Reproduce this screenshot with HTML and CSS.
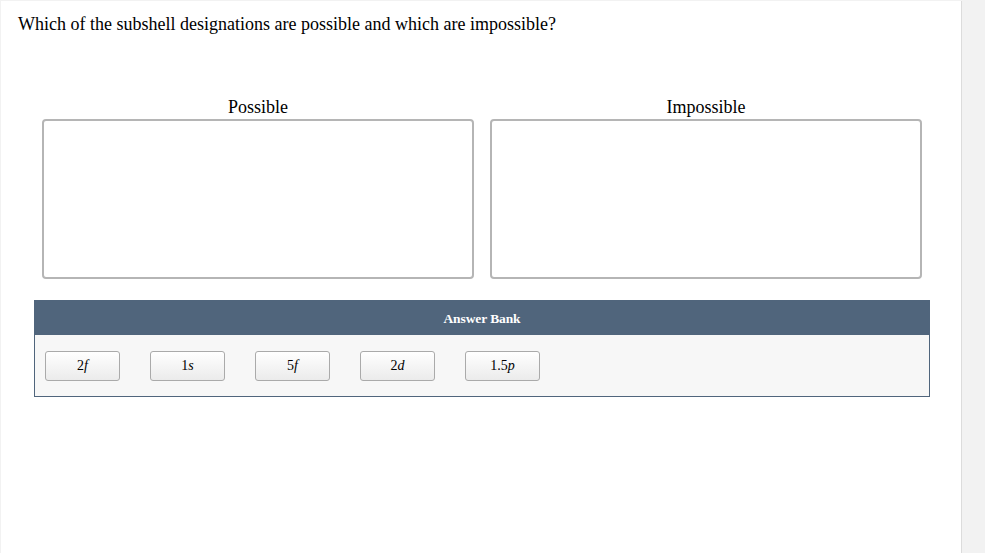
FILE: index.html
```html
<!DOCTYPE html>
<html>
<head>
<meta charset="utf-8">
<link rel="stylesheet" href="styles.css">
</head>
<body>
<div class="page">
  <p class="question">Which of the subshell designations are possible and which are impossible?</p>
  <div class="zones">
    <div class="zone">
      <div class="zone-label">Possible</div>
      <div class="zone-box"></div>
    </div>
    <div class="zone">
      <div class="zone-label">Impossible</div>
      <div class="zone-box"></div>
    </div>
  </div>
  <div class="bank">
    <div class="bank-head">Answer Bank</div>
    <div class="bank-body">
      <div class="chip">2<i>f</i></div>
      <div class="chip">1<i>s</i></div>
      <div class="chip">5<i>f</i></div>
      <div class="chip">2<i>d</i></div>
      <div class="chip">1.5<i>p</i></div>
    </div>
  </div>
</div>
</body>
</html>
```
FILE: styles.css
```css
html, body {
  margin: 0;
  padding: 0;
}
body {
  background: #f2f2f2;
  font-family: "Liberation Serif", "Times New Roman", serif;
  color: #000;
}
.page {
  width: 960px;
  min-height: 552px;
  margin: 1px 0 0 1px;
  background: #fff;
  box-shadow: 1px 0 0 #dcdcdc;
  padding-top: 1px;
  box-sizing: border-box;
}
.question {
  margin: 0;
  padding: 12px 17px 0;
  font-size: 18px;
  line-height: 20px;
}
.zones {
  display: flex;
  gap: 16px;
  margin: 63px 0 0 41px;
}
.zone {
  width: 432px;
  display: flex;
  flex-direction: column;
}
.zone-label {
  text-align: center;
  font-size: 18px;
  line-height: 20px;
  margin-bottom: 2px;
}
.zone-box {
  height: 156px;
  border: 2px solid #b5b5b5;
  border-radius: 4px;
  background: #fff;
}
.bank {
  margin: 21px 31px 0 33px;
  border: 1px solid #50657c;
  border-top: none;
}
.bank-head {
  background: #50657c;
  color: #fff;
  font-weight: bold;
  font-size: 13.5px;
  height: 35px;
  line-height: 37px;
  text-align: center;
  letter-spacing: -0.1px;
}
.bank-body {
  background: #f7f7f7;
  display: flex;
  gap: 30px;
  padding: 16px 10px 15px;
}
.chip {
  width: 73px;
  height: 28px;
  border: 1px solid #aaa;
  border-radius: 3px;
  background: linear-gradient(#ffffff, #ebebeb);
  font-size: 14px;
  line-height: 28px;
  text-align: center;
}
```
